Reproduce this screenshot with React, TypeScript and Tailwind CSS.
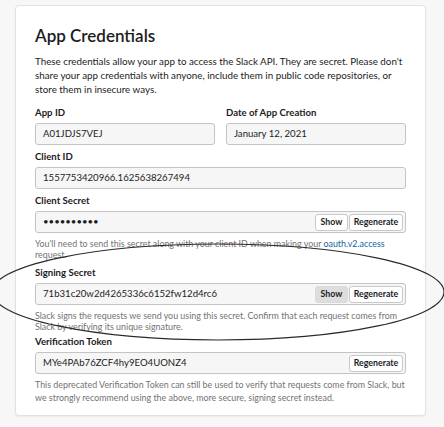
const Field = ({ value, buttons, active }: { value: string; buttons?: string[]; active?: string }) => (
  <div className="flex h-[22px] items-center rounded-[3px] border border-[#c4c4c4] bg-[#f6f6f6] pl-[7px] pr-[2px]">
    <span className="flex-1 text-[9.6px] text-[#1d1c1d]">{value}</span>
    {buttons &&
      buttons.map((b) => (
        <span
          key={b}
          className={
            (b === "Show" ? "w-[33px] " : "w-[54px] ") +
            (b === active
              ? "ml-px flex h-[17px] items-center justify-center rounded-[3px] border border-[#d9d9d9] bg-[#dddddd] text-[8.8px] font-bold text-[#1d1c1d]"
              : "ml-px flex h-[17px] items-center justify-center rounded-[3px] border border-[#c8c8c8] bg-white text-[8.8px] font-bold text-[#1d1c1d]")
          }
        >
          {b}
        </span>
      ))}
  </div>
);

const Label = ({ children }: { children: string }) => (
  <div className="mb-[4px] text-[9.6px] font-bold leading-[12px] text-[#1d1c1d]">{children}</div>
);

const Help = ({ children }: { children: React.ReactNode }) => (
  <p className="mt-[5px] text-[8.9px] leading-[11px] text-[#737373]">{children}</p>
);

export default function App() {
  return (
    <div className="relative h-[427px] w-[444px] overflow-hidden bg-[#f7f7f7] pt-[5px] pl-[15px] font-['Lato',sans-serif]">
      <div className="h-[411px] w-[411px] rounded-[4px] border border-[#e2e2e2] bg-white px-[19px] pt-[20px] shadow-[0_1px_2px_rgba(0,0,0,0.05)]">
        <h1 className="text-[17px] font-semibold leading-[20px] text-[#1d1c1d]">App Credentials</h1>
        <p className="mt-[8px] text-[9.8px] leading-[14px] text-[#1d1c1d]">
          These credentials allow your app to access the Slack API. They are secret. Please don't share your app
          credentials with anyone, include them in public code repositories, or store them in insecure ways.
        </p>

        <div className="mt-[11px] grid grid-cols-2 gap-x-[11px]">
          <div>
            <Label>App ID</Label>
            <Field value="A01JDJS7VEJ" />
          </div>
          <div>
            <Label>Date of App Creation</Label>
            <Field value="January 12, 2021" />
          </div>
        </div>

        <div className="mt-[6px]">
          <Label>Client ID</Label>
          <Field value="1557753420966.1625638267494" />
        </div>

        <div className="mt-[6px]">
          <Label>Client Secret</Label>
          <Field value="••••••••••" buttons={["Show", "Regenerate"]} />
          <Help>
            You'll need to send this secret along with your client ID when making your{" "}
            <span className="text-[#1264a3]">oauth.v2.access</span> request.
          </Help>
        </div>

        <div className="mt-[7px]">
          <Label>Signing Secret</Label>
          <Field value="71b31c20w2d4265336c6152fw12d4rc6" buttons={["Show", "Regenerate"]} active="Show" />
          <Help>
            Slack signs the requests we send you using this secret. Confirm that each request comes from Slack by
            verifying its unique signature.
          </Help>
        </div>

        <div className="mt-[4px]">
          <Label>Verification Token</Label>
          <Field value="MYe4PAb76ZCF4hy9EO4UONZ4" buttons={["Regenerate"]} />
          <p className="mt-[4px] text-[8.9px] leading-[13px] text-[#737373]">
            This deprecated Verification Token can still be used to verify that requests come from Slack, but we
            strongly recommend using the above, more secure, signing secret instead.
          </p>
        </div>
      </div>

      <svg className="pointer-events-none absolute left-0 top-0" width="444" height="427" viewBox="0 0 444 427">
        <ellipse cx="218" cy="292" rx="226" ry="48" fill="none" stroke="#2a2a2a" strokeWidth="1.2" />
      </svg>
    </div>
  );
}
